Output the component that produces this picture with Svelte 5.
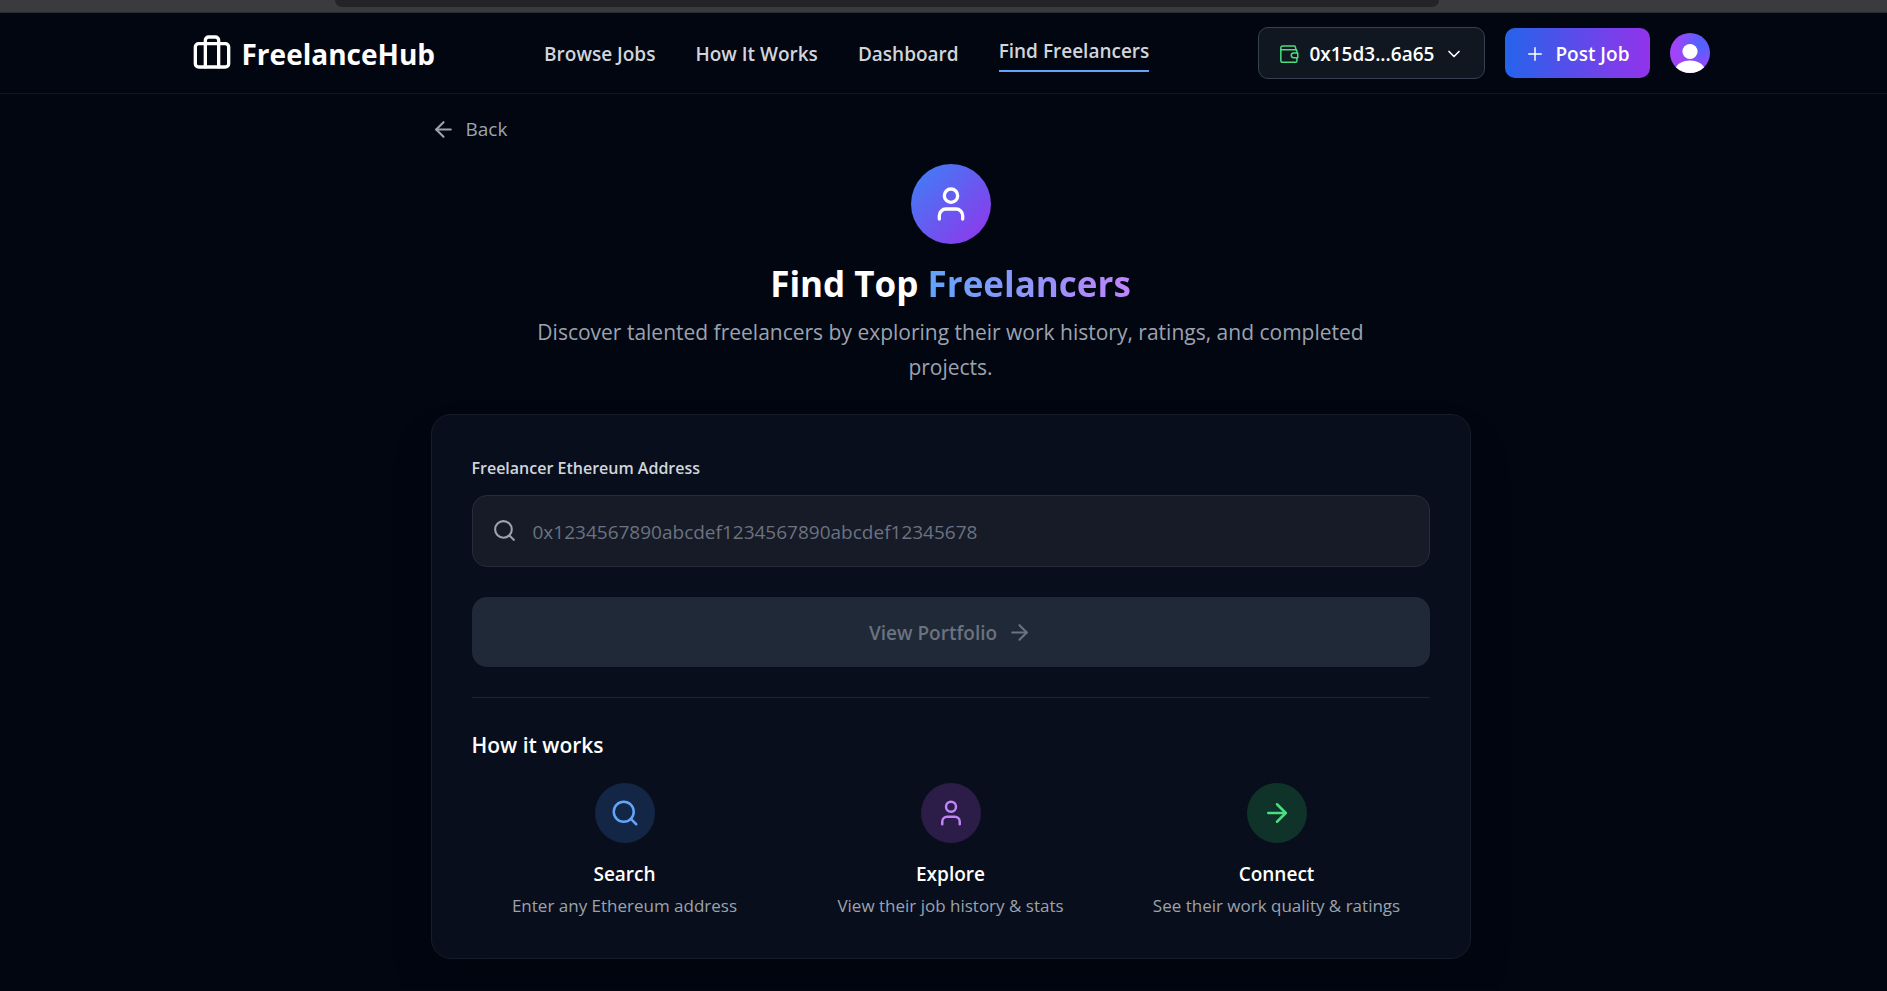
<script>
  const links = [
    { label: 'Browse Jobs', active: false },
    { label: 'How It Works', active: false },
    { label: 'Dashboard', active: false },
    { label: 'Find Freelancers', active: true }
  ];

  const steps = [
    { title: 'Search', text: 'Enter any Ethereum address', icon: 'search', tone: 'blue' },
    { title: 'Explore', text: 'View their job history & stats', icon: 'user', tone: 'purple' },
    { title: 'Connect', text: 'See their work quality & ratings', icon: 'arrow', tone: 'green' }
  ];

  let address = $state('');
</script>

{#snippet icon(name, size, weight = 2)}
  <svg
    width={size}
    height={size}
    viewBox="0 0 24 24"
    fill="none"
    stroke="currentColor"
    stroke-width={weight}
    stroke-linecap="round"
    stroke-linejoin="round"
    aria-hidden="true"
  >
    {#if name === 'search'}
      <circle cx="11" cy="11" r="8" />
      <path d="m21 21-4.3-4.3" />
    {:else if name === 'user'}
      <path d="M19 21v-2a4 4 0 0 0-4-4H9a4 4 0 0 0-4 4v2" />
      <circle cx="12" cy="7" r="4" />
    {:else if name === 'arrow'}
      <path d="M5 12h14" />
      <path d="m12 5 7 7-7 7" />
    {:else if name === 'back'}
      <path d="m12 19-7-7 7-7" />
      <path d="M19 12H5" />
    {:else if name === 'briefcase'}
      <rect x="2" y="7" width="20" height="14" rx="2" />
      <path d="M16 21V5a2 2 0 0 0-2-2h-4a2 2 0 0 0-2 2v16" />
    {:else if name === 'plus'}
      <path d="M4.500 12h15" />
      <path d="M12 4.500v15" />
    {:else if name === 'chevron'}
      <path d="m6 9 6 6 6-6" />
    {:else if name === 'wallet'}
      <path d="M21.500 10.500V8.500a1.500 1.500 0 0 0-1.500-1.500H2.200V20a2 2 0 0 0 2 2H20a1.500 1.500 0 0 0 1.500-1.500v-4" />
      <path d="M2.200 7V4.500a2 2 0 0 1 2-2H18.500a1 1 0 0 1 1 .8L20.500 7" />
      <path d="M22.500 10.800h-5a2.800 2.800 0 0 0 0 5.600h5z" />
    {/if}
  </svg>
{/snippet}

<div class="chrome"><div class="tabs"></div></div>

<div class="page">
  <header>
    <div class="bar">
      <a class="logo" href="#home">{@render icon('briefcase', 40)}<span>FreelanceHub</span></a>
      <nav>
        {#each links as link}
          <a href="#nav" class:active={link.active}>{link.label}</a>
        {/each}
      </nav>
      <div class="actions">
        <button class="wallet" type="button">
          <span class="green-icon">{@render icon('wallet', 20, 1.8)}</span>
          <span>0x15d3...6a65</span>
          {@render icon('chevron', 20)}
        </button>
        <button class="post" type="button">{@render icon('plus', 20, 1.8)}<span>Post Job</span></button>
        <button class="avatar" type="button" aria-label="Account">
          <svg width="40" height="40" viewBox="0 0 40 40" aria-hidden="true">
            <circle cx="20" cy="18.500" r="7.600" fill="#fff" />
            <ellipse cx="20" cy="38" rx="15" ry="10.500" fill="#fff" />
          </svg>
        </button>
      </div>
    </div>
  </header>

  <main>
    <a class="back" href="#back">{@render icon('back', 25)}<span>Back</span></a>

    <section class="hero">
      <div class="badge">{@render icon('user', 40)}</div>
      <h1>Find Top <span>Freelancers</span></h1>
      <p>Discover talented freelancers by exploring their work history, ratings, and completed projects.</p>
    </section>

    <section class="card">
      <form onsubmit={(e) => e.preventDefault()}>
        <label for="address">Freelancer Ethereum Address</label>
        <div class="field">
          {@render icon('search', 25)}
          <input
            id="address"
            type="text"
            placeholder="0x1234567890abcdef1234567890abcdef12345678"
            bind:value={address}
          />
        </div>
        <button class="submit" type="submit" disabled={!address}>
          <span>View Portfolio</span>{@render icon('arrow', 25)}
        </button>
      </form>

      <div class="how">
        <h2>How it works</h2>
        <div class="steps">
          {#each steps as step}
            <div class="step">
              <div class="dot {step.tone}">{@render icon(step.icon, 30)}</div>
              <h3>{step.title}</h3>
              <p>{step.text}</p>
            </div>
          {/each}
        </div>
      </div>
    </section>
  </main>
</div>

<style>
  :global(body) {
    background: #020611;
    font-family: 'Open Sans', 'Noto Sans', sans-serif;
    color: #fff;
  }

  * {
    box-sizing: border-box;
  }

  svg {
    display: block;
    flex-shrink: 0;
  }

  h1,
  h2,
  h3,
  p {
    margin: 0;
  }

  a {
    color: inherit;
    text-decoration: none;
  }

  button,
  input {
    font-family: inherit;
    color: inherit;
    border: 0;
    margin: 0;
  }

  .chrome {
    height: 13px;
    padding: 0 448px 0 335px;
    background: #3b3a3f;
    border-bottom: 1px solid #2b2c33;
  }

  .tabs {
    height: 7px;
    background: #242328;
    border-radius: 0 0 8px 8px;
  }

  .page {
    padding-left: 14px;
  }

  header {
    margin-left: -14px;
    padding-left: 14px;
    border-bottom: 1px solid #12161f;
  }

  .bar {
    display: flex;
    align-items: center;
    justify-content: space-between;
    height: 80px;
    max-width: 1518px;
    margin: 0 auto;
  }

  .logo {
    display: flex;
    align-items: center;
    gap: 10px;
    padding-top: 2px;
    font-size: 28px;
    line-height: 40px;
    font-weight: 700;
  }

  .logo svg {
    margin-bottom: 4px;
  }

  nav {
    display: flex;
    align-items: center;
    gap: 40px;
    padding-top: 2px;
    font-size: 19px;
    line-height: 30px;
    font-weight: 600;
    color: #d1d5db;
  }

  .active {
    padding-bottom: 5px;
    border-bottom: 2px solid #60a5fa;
    line-height: 28px;
  }

  .actions {
    display: flex;
    align-items: center;
    gap: 20px;
  }

  .wallet,
  .post {
    display: flex;
    align-items: center;
    gap: 10px;
    padding: 1px 20px 0;
    border-radius: 10px;
    font-size: 19px;
    line-height: 30px;
    font-weight: 600;
  }

  .wallet {
    height: 52px;
    background: #111721;
    border: 1px solid #374151;
  }

  .green-icon {
    color: #4ade80;
  }

  .post {
    height: 50px;
    background: linear-gradient(90deg, #2563eb, #9333ea);
  }

  .avatar {
    width: 40px;
    height: 40px;
    padding: 0;
    border-radius: 50%;
    overflow: hidden;
    background: radial-gradient(circle at 78% 28%, #5560ff 10%, #a044f8 60%);
  }

  main {
    max-width: 1040px;
    margin: 0 auto;
    padding: 20px 0 31px;
  }

  .back {
    display: inline-flex;
    align-items: center;
    gap: 10px;
    font-size: 19px;
    line-height: 30px;
    color: #9ca3af;
  }

  .hero {
    display: flex;
    flex-direction: column;
    align-items: center;
    padding-top: 17px;
    text-align: center;
  }

  .badge {
    display: grid;
    place-items: center;
    width: 80px;
    height: 80px;
    border-radius: 50%;
    background: linear-gradient(135deg, #3b82f6, #9333ea);
  }

  h1 {
    margin-top: 17px;
    font-size: 35px;
    line-height: 45px;
    font-weight: 700;
  }

  h1 span {
    background: linear-gradient(90deg, #60a5fa, #c084fc);
    background-clip: text;
    -webkit-background-clip: text;
    color: transparent;
  }

  .hero p {
    max-width: 840px;
    margin-top: 9px;
    font-size: 21px;
    line-height: 35px;
    color: #9ca3af;
  }

  .card {
    margin-top: 29px;
    padding: 40px;
    border: 1px solid #161c29;
    border-radius: 20px;
    background: #080e1b;
    box-shadow: 0 25px 50px -12px rgba(0, 0, 0, 0.25);
  }

  label {
    display: block;
    margin-bottom: 13px;
    font-size: 16px;
    line-height: 27px;
    font-weight: 600;
    color: #d1d5db;
  }

  .field {
    display: flex;
    align-items: center;
    gap: 16px;
    height: 72px;
    padding: 0 19px;
    border: 1px solid #262c38;
    border-radius: 15px;
    background: #161b27;
    color: #9ca3af;
  }

  input {
    flex: 1;
    min-width: 0;
    height: 100%;
    padding: 2px 0 0;
    background: transparent;
    outline: 0;
    font-size: 19px;
  }

  input::placeholder {
    color: #6b7280;
    opacity: 1;
  }

  .submit {
    display: flex;
    align-items: center;
    justify-content: center;
    gap: 10px;
    width: 100%;
    height: 70px;
    margin-top: 30px;
    padding: 2px 20px 0;
    border-radius: 15px;
    background: #1f2937;
    color: #6b7280;
    font-size: 19px;
    font-weight: 600;
  }

  .how {
    margin-top: 30px;
    padding-top: 30px;
    border-top: 1px solid #1e2430;
  }

  h2 {
    font-size: 21px;
    line-height: 35px;
    font-weight: 600;
  }

  .steps {
    display: grid;
    grid-template-columns: repeat(3, 1fr);
    gap: 20px;
    margin-top: 20px;
  }

  .step {
    display: flex;
    flex-direction: column;
    align-items: center;
    text-align: center;
  }

  .dot {
    display: grid;
    place-items: center;
    width: 60px;
    height: 60px;
    border-radius: 50%;
  }

  .blue {
    background: #132646;
    color: #60a5fa;
  }

  .purple {
    background: #2b1d47;
    color: #c084fc;
  }

  .green {
    background: #0f3329;
    color: #4ade80;
  }

  h3 {
    margin-top: 16px;
    font-size: 19px;
    line-height: 30px;
    font-weight: 600;
  }

  .step p {
    margin-top: 4px;
    font-size: 17px;
    line-height: 25px;
    color: #9ca3af;
  }
</style>
